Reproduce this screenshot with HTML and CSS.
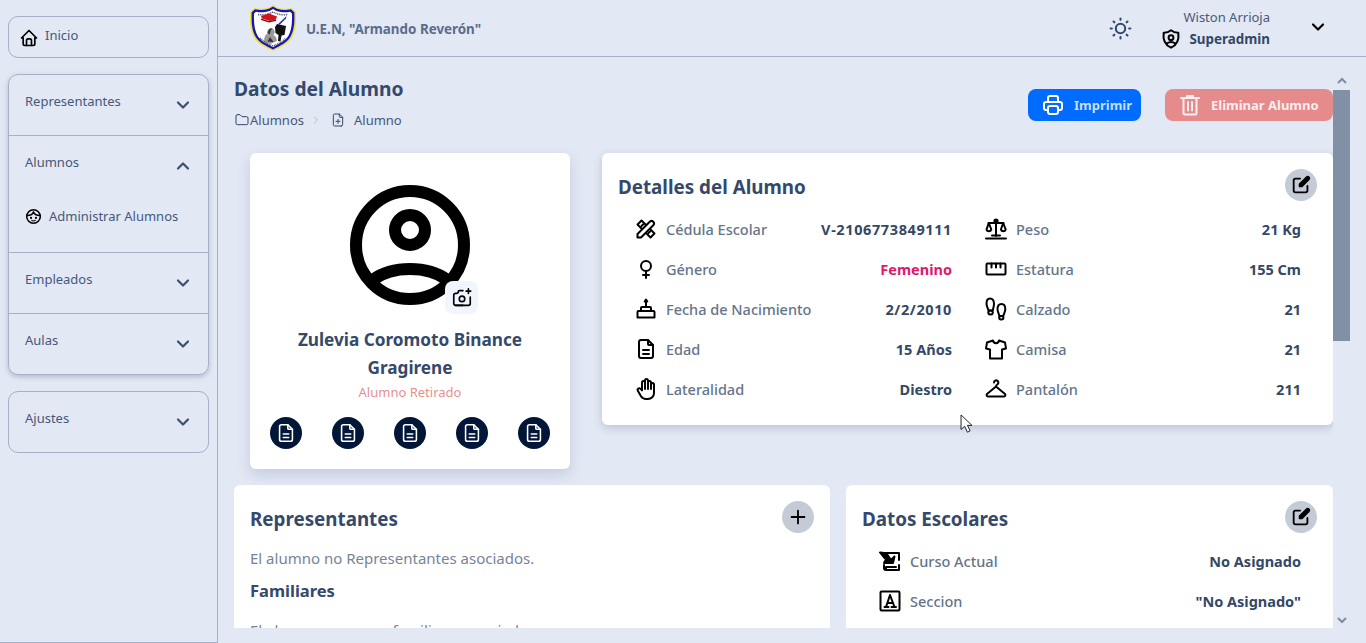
FILE: index.html
```html
<!DOCTYPE html>
<html lang="es">
<head>
<meta charset="utf-8">
<title>Datos del Alumno</title>
<link rel="stylesheet" href="styles.css">
</head>
<body>
<div class="app">
  <aside class="sidebar">
    <nav class="group group-single">
      <a class="home-link">
        <svg class="ico ico-home" viewBox="0 0 24 24"><path d="M5 12H3l9-9 9 9h-2"/><path d="M5 12v7a2 2 0 0 0 2 2h10a2 2 0 0 0 2-2v-7"/><path d="M9 21v-6a2 2 0 0 1 2-2h2a2 2 0 0 1 2 2v6"/></svg>
        <span>Inicio</span>
      </a>
    </nav>
    <nav class="group group-shadow">
      <div class="item">
        <div class="item-head"><span>Representantes</span><svg class="chev" viewBox="0 0 24 24"><path d="M6 9l6 6 6-6"/></svg></div>
      </div>
      <div class="item item-open">
        <div class="item-head"><span>Alumnos</span><svg class="chev" viewBox="0 0 24 24"><path d="M6 15l6-6 6 6"/></svg></div>
        <div class="sub">
          <svg class="ico ico-face" viewBox="0 0 24 24"><circle cx="12" cy="12" r="9.600"/><path d="M3 10.500c4.500 0 8-2 9-5 1 3 4.500 5 9 5"/><path class="dot" d="M8.500 14h.01M15.500 14h.01"/><path class="smile" d="M9.500 17.500c1.500 1 3.500 1 5 0"/></svg>
          <span>Administrar Alumnos</span>
        </div>
      </div>
      <div class="item">
        <div class="item-head"><span>Empleados</span><svg class="chev" viewBox="0 0 24 24"><path d="M6 9l6 6 6-6"/></svg></div>
      </div>
      <div class="item">
        <div class="item-head"><span>Aulas</span><svg class="chev" viewBox="0 0 24 24"><path d="M6 9l6 6 6-6"/></svg></div>
      </div>
    </nav>
    <nav class="group">
      <div class="item">
        <div class="item-head"><span>Ajustes</span><svg class="chev" viewBox="0 0 24 24"><path d="M6 9l6 6 6-6"/></svg></div>
      </div>
    </nav>
  </aside>

  <div class="main">
    <header class="topbar">
      <div class="brand">
        <svg class="logo" viewBox="0 0 46 46">
          <path d="M23 0l4 2.500c5 1.500 10 1.500 14.500.5L46 7c.5 13-.5 20-4.500 26.500C38 39 31 42 23 46 15 42 8 39 4.500 33.500.5 27-.5 20 0 7l4.500-4c4.500 1 9.500 1 14.500-.5z" fill="#efe23a"/>
          <path d="M23 1.500l4 2.300c5 1.500 9.500 1.500 14 .5l3.300 3c.5 12-.5 19-4.300 25.200-3.300 5-9.500 8-17 12-7.500-4-13.700-7-17-12C2.200 26.300 1.200 19.300 1.700 7.300L5 4.300c4.500 1 9 1 14-.5z" fill="#1414c4"/>
          <path d="M23 4l3.500 2c5 1.500 9.500 1.500 13.500.7l2 1.800c.3 11-.7 17.500-4 23-3 4.500-8.500 7-15 10.700C16.500 38.500 11 36 8 31.500c-3.300-5.500-4.300-12-4-23l2-1.800c4 .8 8.500.8 13.500-.7z" fill="#fff"/>
          <path class="logo-band" d="M8 9.500c5 1 10 0 15-2.500 5 2.500 10 3.500 15 2.500"/>
          <path d="M11 11l8-2.500 8 3-1 3-6 1.500-8-2.500z" fill="#d5101c"/>
          <path d="M11 13.500l8 2.500 7-1.500v1.500l-7 1.500-8-2.500z" fill="#8a1018"/>
          <path d="M25 22l2-3 9 2-1.500 9-3 .5-1 6-2.500-.5.500-6-3-2z" fill="#111"/>
          <path d="M28 19l8.500-8-.5 2.500-6.500 6.500z" fill="#2438c0"/>
          <path d="M14 37c0-5 1.500-7.500 3.500-8.500-1-3.500 2-6.500 5-5 3 1.500 2.500 5 1 6.500 2 1 3.500 3 3.500 6l-6.500 3z" fill="#9a9a9a"/>
          <path d="M17.500 28c.5-3 3-5 5-4.500-1.500 1-2.500 3-2.500 6zM20 32l3.500 5-6-.5z" fill="#333"/>
          <path class="logo-band" d="M10 33c4 4 8 6 13 8 5-2 9-4 13-8"/>
        </svg>
        <span class="brand-name">U.E.N, "Armando Reverón"</span>
      </div>
      <div class="top-actions">
        <svg class="ico ico-sun" viewBox="0 0 24 24"><circle cx="12" cy="12" r="4.500"/><path d="M2.500 12h1.200m8.300-9.500v1.200m8.300 8.300h1.200M12 20.300v1.200M5.300 5.300l.8.8m12.600-.8l-.8.8m0 11.800l.8.8M6.100 17.900l-.8.8"/></svg>
        <div class="user">
          <span class="user-name">Wiston Arrioja</span>
          <div class="user-role">
            <svg class="ico ico-shield" viewBox="0 0 24 24"><path d="M12 2.500a12 12 0 0 0 8 2.700c1 7.300-1.800 13.300-8 16.300-6.200-3-9-9-8-16.300A12 12 0 0 0 12 2.500z"/><circle cx="12" cy="10.500" r="2.600"/><path d="M7.500 16.800c2.800-1.800 6.200-1.800 9 0"/></svg>
            <span>Superadmin</span>
          </div>
        </div>
        <svg class="chev chev-user" viewBox="0 0 24 24"><path d="M6 9l6 6 6-6"/></svg>
      </div>
    </header>

    <div class="viewport">
      <main class="content">
        <div class="page-head">
          <div>
            <h1>Datos del Alumno</h1>
            <div class="crumbs">
              <svg class="ico ico-crumb" viewBox="0 0 24 24"><path d="M5 4h4l3 3h7a2 2 0 0 1 2 2v8a2 2 0 0 1-2 2H5a2 2 0 0 1-2-2V6a2 2 0 0 1 2-2"/></svg>
              <span>Alumnos</span>
              <svg class="ico ico-sep" viewBox="0 0 24 24"><path d="M9 6l6 6-6 6"/></svg>
              <svg class="ico ico-crumb ico-file" viewBox="0 0 24 24"><path d="M14 3v4a1 1 0 0 0 1 1h4"/><path d="M17 21H7a2 2 0 0 1-2-2V5a2 2 0 0 1 2-2h7l5 5v11a2 2 0 0 1-2 2z"/><path d="M12 11v6M9 14h6"/></svg>
              <span>Alumno</span>
            </div>
          </div>
          <div class="actions">
            <button class="btn btn-blue">
              <svg class="ico ico-btn" viewBox="0 0 24 24"><path d="M17 17h2a2 2 0 0 0 2-2v-4a2 2 0 0 0-2-2H5a2 2 0 0 0-2 2v4a2 2 0 0 0 2 2h2"/><path d="M17 9V5a2 2 0 0 0-2-2H9a2 2 0 0 0-2 2v4"/><rect x="7" y="13" width="10" height="8" rx="2"/></svg>
              <span>Imprimir</span>
            </button>
            <button class="btn btn-red">
              <svg class="ico ico-btn" viewBox="0 0 24 24"><path d="M3 5h18M9 5V3h6v2"/><path d="M5.500 5v15a1.500 1.500 0 0 0 1.500 1.500h10a1.500 1.500 0 0 0 1.500-1.500V5"/><path d="M10 9v8.500M14 9v8.500"/></svg>
              <span>Eliminar Alumno</span>
            </button>
          </div>
        </div>

        <section class="row-top">
          <article class="card profile">
            <div class="avatar">
              <svg class="avatar-ico" viewBox="0 0 24 24"><circle cx="12" cy="12" r="9"/><circle cx="12" cy="9.500" r="2.500"/><path d="M5.800 17.800C7.300 16.700 9.500 16 12 16s4.700.7 6.200 1.800"/></svg>
              <span class="cam">
                <svg class="ico ico-cam" viewBox="0 0 24 24"><path d="M13 20H5a2 2 0 0 1-2-2V9a2 2 0 0 1 2-2h1a2 2 0 0 0 2-2 1 1 0 0 1 1-1h4"/><path d="M5 20h14a2 2 0 0 0 2-2v-7"/><circle cx="12" cy="13" r="3"/><path d="M19 2v5M16.500 4.500h5"/></svg>
              </span>
            </div>
            <h2 class="name">Zulevia Coromoto Binance Gragirene</h2>
            <p class="status">Alumno Retirado</p>
            <div class="docs">
              <span class="doc"><svg class="ico ico-doc" viewBox="0 0 24 24"><path d="M14 3v4a1 1 0 0 0 1 1h4"/><path d="M17 21H7a2 2 0 0 1-2-2V5a2 2 0 0 1 2-2h7l5 5v11a2 2 0 0 1-2 2z"/><path d="M9 13h6M9 17h6"/></svg></span>
              <span class="doc"><svg class="ico ico-doc" viewBox="0 0 24 24"><path d="M14 3v4a1 1 0 0 0 1 1h4"/><path d="M17 21H7a2 2 0 0 1-2-2V5a2 2 0 0 1 2-2h7l5 5v11a2 2 0 0 1-2 2z"/><path d="M9 13h6M9 17h6"/></svg></span>
              <span class="doc"><svg class="ico ico-doc" viewBox="0 0 24 24"><path d="M14 3v4a1 1 0 0 0 1 1h4"/><path d="M17 21H7a2 2 0 0 1-2-2V5a2 2 0 0 1 2-2h7l5 5v11a2 2 0 0 1-2 2z"/><path d="M9 13h6M9 17h6"/></svg></span>
              <span class="doc"><svg class="ico ico-doc" viewBox="0 0 24 24"><path d="M14 3v4a1 1 0 0 0 1 1h4"/><path d="M17 21H7a2 2 0 0 1-2-2V5a2 2 0 0 1 2-2h7l5 5v11a2 2 0 0 1-2 2z"/><path d="M9 13h6M9 17h6"/></svg></span>
              <span class="doc"><svg class="ico ico-doc" viewBox="0 0 24 24"><path d="M14 3v4a1 1 0 0 0 1 1h4"/><path d="M17 21H7a2 2 0 0 1-2-2V5a2 2 0 0 1 2-2h7l5 5v11a2 2 0 0 1-2 2z"/><path d="M9 13h6M9 17h6"/></svg></span>
            </div>
          </article>

          <article class="card details">
            <div class="card-head">
              <h2>Detalles del Alumno</h2>
              <button class="round"><svg class="ico ico-edit" viewBox="0 0 24 24"><path d="M11 5H6a2 2 0 0 0-2 2v11a2 2 0 0 0 2 2h11a2 2 0 0 0 2-2v-5"/><path class="fill" d="M20.500 3.500a1.600 1.600 0 0 0-2.300 0L10.500 11v2.500H13l7.500-7.700a1.600 1.600 0 0 0 0-2.300z"/></svg></button>
            </div>
            <div class="info-grid">
              <div class="info"><svg class="ico" viewBox="0 0 24 24"><path d="M3.500 7.500l4-4 13 13-4 4z"/><path d="M7.500 9l1.500-1.500M11 12.500l1.500-1.500M14.500 16l1.500-1.500"/><path class="knock" d="M3.500 20.500V17L16 4.500a2.500 2.500 0 0 1 3.500 3.500L7 20.500z"/></svg><span class="lab">Cédula Escolar</span><b class="num">V-2106773849111</b></div>
              <div class="info"><svg class="ico" viewBox="0 0 24 24"><circle cx="12" cy="9" r="5"/><path d="M12 14v7M9 18h6"/></svg><span class="lab">Género</span><b class="pink">Femenino</b></div>
              <div class="info"><svg class="ico" viewBox="0 0 24 24"><path d="M3.500 20.500h17V15a1 1 0 0 0-1-1h-15a1 1 0 0 0-1 1z"/><path d="M7 14v-3a1 1 0 0 1 1-1h8a1 1 0 0 1 1 1v3"/><path d="M12 10V5"/><path class="fill" d="M12 2.500l1.300 2h-2.600z"/></svg><span class="lab">Fecha de Nacimiento</span><b class="num">2/2/2010</b></div>
              <div class="info"><svg class="ico" viewBox="0 0 24 24"><path d="M14 3v4a1 1 0 0 0 1 1h4"/><path d="M17 21H7a2 2 0 0 1-2-2V5a2 2 0 0 1 2-2h7l5 5v11a2 2 0 0 1-2 2z"/><path d="M9 13h6M9 17h6"/></svg><span class="lab">Edad</span><b>15 Años</b></div>
              <div class="info"><svg class="ico" viewBox="0 0 24 24"><path d="M8 13V5.500a1.500 1.500 0 0 1 3 0V12"/><path d="M11 5.500v-2a1.500 1.500 0 1 1 3 0V12"/><path d="M14 5.500a1.500 1.500 0 0 1 3 0V12"/><path d="M17 7.500a1.500 1.500 0 0 1 3 0V16a6 6 0 0 1-6 6h-2a6 6 0 0 1-5-2.700C6.700 18.800 5.600 16.900 3.700 13.600a1.500 1.500 0 0 1 .5-2 1.900 1.900 0 0 1 2.300.3L8 13.400"/></svg><span class="lab">Lateralidad</span><b>Diestro</b></div>

              <div class="info"><svg class="ico" viewBox="0 0 24 24"><path d="M2 21.500h20"/><path d="M12 4v15M8 18.500h8M4.500 6h15"/><circle cx="12" cy="4" r="1.600"/><path d="M4.800 6L2.500 12.500a2.500 2.500 0 0 0 4.800 0zM19.200 6l-2.300 6.500a2.500 2.500 0 0 0 4.800 0z"/></svg><span class="lab">Peso</span><b>21 Kg</b></div>
              <div class="info"><svg class="ico" viewBox="0 0 24 24"><rect x="2.500" y="6.500" width="19" height="11" rx="1"/><path d="M7.500 6.500v4M12 6.500v4M16.500 6.500v4"/></svg><span class="lab">Estatura</span><b>155 Cm</b></div>
              <div class="info"><svg class="ico" viewBox="0 0 24 24"><path d="M6 1.500c2.700 0 4 2.500 4 5.500 0 2.500-1 4.500-1.200 6.500H4.500C4 11 2.500 9.500 2.500 6.500 2.500 3.500 3.800 1.500 6 1.500z"/><rect x="4.300" y="13.500" width="4.500" height="4" rx="2"/><path d="M17.500 7c2.300 0 3.800 2 3.800 5 0 3-1.500 4.500-2 7h-4c-.3-2.500-1.800-4-1.800-7 0-3 1.700-5 4-5z"/><rect x="15.200" y="19" width="4.200" height="3.500" rx="1.800"/></svg><span class="lab">Calzado</span><b>21</b></div>
              <div class="info"><svg class="ico" viewBox="0 0 24 24"><path d="M15 3.500l6 2 1 6-4 1V21.500H6V12.500l-4-1 1-6 6-2c.5 3.500 5.500 3.500 6 0z"/></svg><span class="lab">Camisa</span><b>21</b></div>
              <div class="info"><svg class="ico" viewBox="0 0 24 24"><path d="M10 5.500a2.200 2.200 0 1 1 3.300 2c-.8.500-1.300 1-1.300 2L3 17c-.8.800-.4 2.500 1 2.500h16c1.400 0 1.800-1.700 1-2.500l-9-7.500"/></svg><span class="lab">Pantalón</span><b>211</b></div>
            </div>
          </article>
        </section>

        <section class="row-bottom">
          <article class="card reps">
            <div class="card-head">
              <h2>Representantes</h2>
              <button class="round"><svg class="ico ico-plus" viewBox="0 0 24 24"><path d="M12 5v14M5 12h14"/></svg></button>
            </div>
            <p class="muted">El alumno no Representantes asociados.</p>
            <h3>Familiares</h3>
            <p class="muted muted-last">El alumno no posee familiares asociados.</p>
          </article>
          <article class="card school">
            <div class="card-head">
              <h2>Datos Escolares</h2>
              <button class="round"><svg class="ico ico-edit" viewBox="0 0 24 24"><path d="M11 5H6a2 2 0 0 0-2 2v11a2 2 0 0 0 2 2h11a2 2 0 0 0 2-2v-5"/><path class="fill" d="M20.500 3.500a1.600 1.600 0 0 0-2.300 0L10.500 11v2.500H13l7.500-7.700a1.600 1.600 0 0 0 0-2.300z"/></svg></button>
            </div>
            <div class="info-list">
              <div class="info"><svg class="ico" viewBox="0 0 24 24"><path d="M3 4h18v7M21 16v5H8v-3h10M8 21a2 2 0 0 1-2-2v-3"/><path class="fill" d="M2 3.500c3 0 6 1 8 3l3 4.500 3.500-3.500L15 14H6l2-3.500C6 8 4 6 2 3.500z"/></svg><span class="lab">Curso Actual</span><b>No Asignado</b></div>
              <div class="info"><svg class="ico" viewBox="0 0 24 24"><rect x="2.500" y="2.500" width="19" height="19" rx="1"/><path d="M6.500 18h4M13.500 18h4.500M8 18l4-12 4.500 12M9.500 14h5.500"/></svg><span class="lab">Seccion</span><b>"No Asignado"</b></div>
            </div>
          </article>
        </section>
      </main>
      <div class="scrollbar">
        <svg class="sb-arrow" viewBox="0 0 24 24"><path d="M6 15l6-6 6 6"/></svg>
        <div class="sb-track"><div class="sb-thumb"></div></div>
        <svg class="sb-arrow" viewBox="0 0 24 24"><path d="M6 9l6 6 6-6"/></svg>
      </div>
    </div>
  </div>
</div>
<svg class="cursor" viewBox="0 0 14 22"><path d="M1 1v16l4-3.500L8 20l3-1.500-3-6h5z"/></svg>
</body>
</html>
```
FILE: styles.css
```css
* { box-sizing: border-box; }
html, body { margin: 0; height: 643px; overflow: hidden; }
body {
  background: #e2e8f4;
  font-family: "Noto Sans", "Open Sans", sans-serif;
  font-size: 14px;
  color: #334866;
}
h1, h2, h3, p { margin: 0; }

.ico { width: 24px; height: 24px; fill: none; stroke: #000; stroke-width: 2; stroke-linecap: round; stroke-linejoin: round; flex: none; }
.ico .fill { fill: #000; }
.ico .knock { fill: #fff; }
.chev { width: 20px; height: 20px; fill: none; stroke: #3b4f70; stroke-width: 2.600; stroke-linecap: round; stroke-linejoin: round; flex: none; }

.app { display: flex; height: 643px; }

/* Sidebar */
.sidebar {
  width: 218px;
  flex: none;
  border-right: 1px solid #a6b1c8;
  border-bottom: 1px solid #a6b1c8;
  padding: 16px 8px 0;
  display: flex;
  flex-direction: column;
  gap: 16px;
  color: #46587a;
  font-size: 13px;
}
.group { width: 201px; border: 1px solid #a6b1c8; border-radius: 10px; }
.group-shadow { box-shadow: 0 2px 5px rgba(70, 85, 115, .3); }
.home-link { display: flex; align-items: center; height: 40px; padding: 0 0 4px 10px; gap: 6px; }
.ico-home { width: 20px; height: 20px; margin-top: 5px; }
.item { border-top: 1px solid #a6b1c8; height: 61px; padding: 16px 15px 0 16px; }
.item:first-child { border-top: 0; height: 60px; }
.item-open { height: 117px; }
.item-head { display: flex; justify-content: space-between; line-height: 20px; }
.item-head .chev { margin-top: 4px; }
.sub { display: flex; align-items: center; gap: 7px; margin-top: 31px; }
.ico-face { width: 17px; height: 17px; stroke-width: 2.200; }
.ico-face .dot { stroke-width: 3; }
.ico-face .smile { stroke-width: 1.500; }

/* Top bar */
.main { width: 1148px; display: flex; flex-direction: column; }
.topbar {
  height: 57px;
  border-bottom: 1px solid #a6b1c8;
  display: flex;
  justify-content: space-between;
  align-items: center;
  padding: 0 38px 0 32px;
}
.brand { display: flex; align-items: center; gap: 10px; }
.logo { width: 46px; height: 46px; margin-top: -1px; }
.logo-band { fill: none; stroke: #555; stroke-width: 1.500; stroke-dasharray: 1 .8; }
.brand-name { font-weight: 700; font-size: 13.400px; color: #5a6d8c; margin-top: 2px; }
.top-actions { display: flex; align-items: center; }
.ico-sun { stroke: #34496b; width: 25px; height: 25px; margin-right: 27px; }
.user { width: 110px; display: flex; flex-direction: column; align-items: flex-end; line-height: 22px; }
.user-name { color: #4a5a78; font-size: 13px; }
.user-role { display: flex; align-items: center; width: 100%; justify-content: space-between; font-weight: 700; font-size: 13.400px; }
.ico-shield { width: 22px; height: 22px; stroke-width: 2.200; }
.chev-user { stroke: #000; margin-left: 38px; margin-top: -2px; }

/* Scrolling area */
.viewport { display: flex; height: 571px; padding-right: 16px; }
.content { width: 1115px; overflow: hidden; padding: 20px 0 0 16px; }
.scrollbar { width: 17px; display: flex; flex-direction: column; align-items: center; }
.sb-arrow { width: 16px; height: 16px; fill: none; stroke: #7f8ca3; stroke-width: 3; margin-top: 16px; flex: none; }
.sb-track { flex: 1; width: 17px; margin-top: 1px; }
.sb-thumb { height: 251px; background: #8290a5; }
.sb-arrow:last-child { margin-top: 0; }

.page-head { display: flex; justify-content: space-between; align-items: flex-start; height: 76px; }
h1 { font-size: 19.200px; line-height: 24px; font-weight: 700; color: #34496b; }
.crumbs { display: flex; align-items: center; height: 20px; margin-top: 9px; color: #46587a; font-size: 13px; }
.ico-crumb { width: 16px; height: 16px; stroke: #34496b; stroke-width: 1.500; }
.ico-sep { width: 12px; height: 12px; stroke: #b4bfd0; margin: 0 8px 0 6px; }
.ico-file { margin-right: 8px; }
.actions { display: flex; gap: 24px; margin-top: 12px; }
.btn {
  height: 32px;
  border: 0;
  border-radius: 8px;
  display: flex;
  align-items: center;
  gap: 9px;
  padding: 0 13px;
  font: 700 13px "Noto Sans", sans-serif;
  white-space: nowrap;
}
.btn-blue { width: 113px; background: #006bff; color: #c9defc; }
.btn-red { width: 168px; background: #e58b8b; color: #fbeeee; }
.ico-btn { width: 24px; height: 24px; }
.btn-blue .ico-btn { stroke: #fff; }
.btn-red .ico-btn { stroke: #fbeeee; }

/* Cards */
.card { background: #fff; border-radius: 6px; }
.row-top { display: flex; align-items: flex-start; padding-left: 16px; gap: 32px; }
.profile {
  width: 320px;
  height: 316px;
  padding: 32px 20px 0;
  text-align: center;
  box-shadow: 0 6px 14px rgba(70, 85, 115, .18);
}
.avatar { position: relative; display: flow-root; width: 120px; height: 120px; margin: 0 auto; }
.avatar-ico { width: 144px; height: 144px; margin: -12px; fill: none; stroke: #000; stroke-width: 2; display: block; }
.cam {
  position: absolute;
  left: 95px;
  top: 96px;
  width: 33px;
  height: 33px;
  border-radius: 8px;
  background: #f0f5ff;
  display: flex;
  align-items: center;
  justify-content: center;
}
.ico-cam { width: 22px; height: 22px; stroke-width: 1.800; }
.name { font-size: 17.200px; line-height: 28px; margin-top: 21px; font-weight: 700; color: #34496b; padding: 0 20px; }
.status { color: #e88f8f; line-height: 20px; font-size: 13px; }
.docs { display: flex; justify-content: space-between; margin-top: 15px; }
.doc { width: 32px; height: 32px; border-radius: 50%; background: #021638; display: flex; align-items: center; justify-content: center; }
.ico-doc { width: 22px; height: 22px; stroke: #fff; stroke-width: 1.700; }

.details {
  width: 731px;
  height: 272px;
  padding: 16px;
  box-shadow: 0 3px 8px rgba(70, 85, 115, .25);
}
.card-head { display: flex; justify-content: space-between; align-items: flex-start; height: 32px; margin-bottom: 8px; }
.card-head h2 { font-size: 18.800px; line-height: 36px; color: #34496b; font-weight: 700; }
.round { width: 32px; height: 32px; border-radius: 50%; border: 0; background: #c5cbd6; padding: 0; display: flex; align-items: center; justify-content: center; }
.info .ico { width: 24px; height: 24px; }
.round .ico-edit { width: 22px; height: 22px; }
.info-grid {
  display: grid;
  grid-template-rows: repeat(5, 40px);
  grid-auto-flow: column;
  grid-template-columns: 318px 317px;
  column-gap: 32px;
  padding-left: 16px;
}
.info { display: flex; align-items: center; height: 40px; gap: 8px; font-size: 14.500px; }
.lab { color: #64748b; flex: 1; font-weight: 500; }
.info b { color: #334866; font-weight: 700; }
.info .pink { color: #e0186c; }
.info .num { letter-spacing: .6px; }

.row-bottom { display: flex; gap: 16px; margin-top: 16px; }
.reps { width: 596px; height: 300px; padding: 16px; flex: none; }
.school { width: 487px; height: 300px; padding: 16px; flex: none; }
.muted { font-size: 15px; line-height: 24px; color: #768499; margin-top: 13px; }
h3 { font-size: 16.500px; line-height: 28px; margin-top: 7px; color: #34496b; font-weight: 700; }
.muted-last { margin-top: 13px; }
.info-list { padding: 0 16px; }
.ico-plus { width: 22px; height: 22px; }

.cursor {
  position: absolute;
  left: 960px;
  top: 414px;
  width: 13px;
  height: 20px;
  fill: #fff;
  stroke: #111;
  stroke-width: 1;
}
```
